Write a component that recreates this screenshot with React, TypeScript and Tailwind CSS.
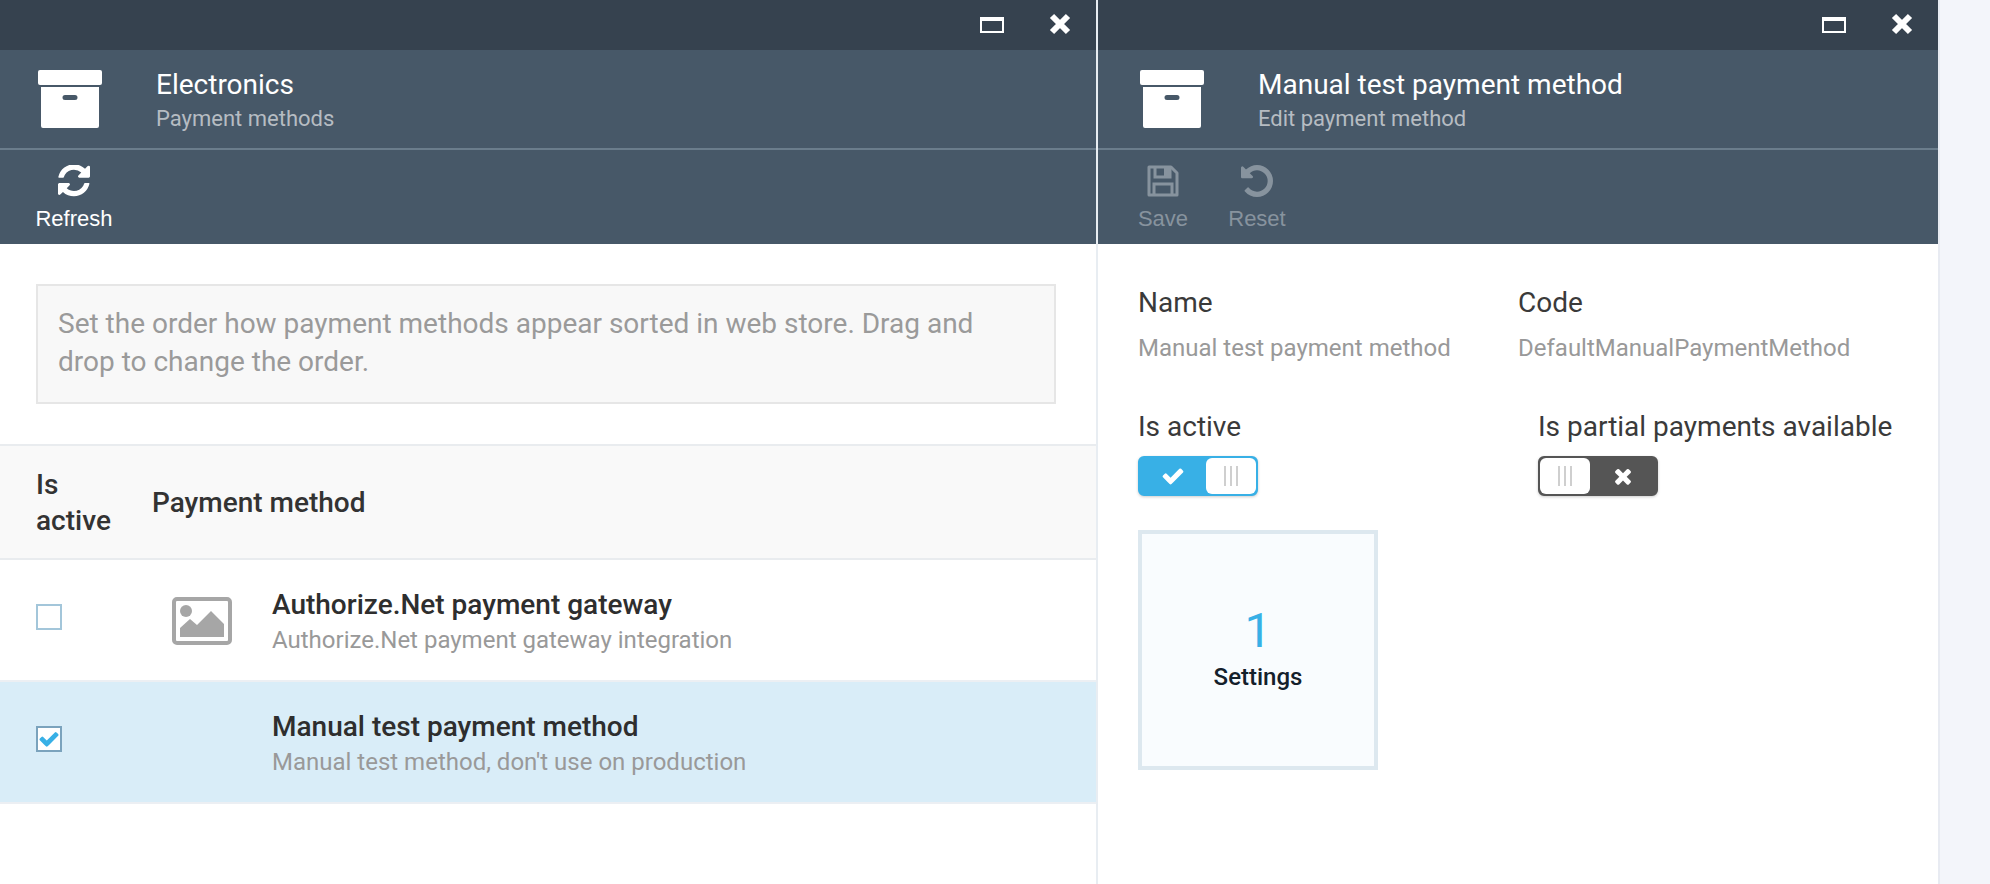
const BoxIcon = () => (
  <svg width="64" height="58" viewBox="0 0 64 58" fill="#fff" className="block">
    <rect x="0" y="0" width="64" height="15" rx="2" />
    <path d="M3 17h58v39a2 2 0 0 1-2 2H5a2 2 0 0 1-2-2z M27 25a2.5 2.5 0 0 0 0 5h10a2.5 2.5 0 0 0 0-5z" fillRule="evenodd" />
  </svg>
);

const ImageIcon = () => (
  <svg width="60" height="48" viewBox="0 0 60 48" className="block">
    <rect x="2" y="2" width="56" height="44" rx="3" fill="none" stroke="#a6a6a6" strokeWidth="4" />
    <circle cx="14" cy="14" r="6" fill="#a6a6a6" />
    <path d="M8 40V31l10-9 7 6 14-14 13 13v13z" fill="#a6a6a6" />
  </svg>
);

const RefreshIcon = () => (
  <svg width="32" height="32" viewBox="0 160 1536 1536" fill="currentColor" className="block">
    <path d="M1511 1056q0 5-1 7-64 268-268 434.5t-478 166.5q-146 0-282.5-55t-243.5-157l-129 129q-19 19-45 19t-45-19-19-45v-448q0-26 19-45t45-19h448q26 0 45 19t19 45-19 45l-137 137q71 66 161 102t187 36q134 0 250-65t186-179q11-17 53-117 8-23 30-23h192q13 0 22.5 9.5t9.5 22.5zm25-800v448q0 26-19 45t-45 19h-448q-26 0-45-19t-19-45 19-45l138-138q-148-137-349-137-134 0-250 65t-186 179q-11 17-53 117-8 23-30 23h-199q-13 0-22.5-9.5t-9.5-22.5v-7q65-268 270-434.5t480-166.5q146 0 284 55.5t245 156.5l130-129q19-19 45-19t45 19 19 45z" />
  </svg>
);

const UndoIcon = () => (
  <svg width="32" height="32" viewBox="0 -128 1536 1536" fill="currentColor" className="block">
    <path d="M1536 640q0 156-61 298t-164 245-245 164-298 61q-172 0-327-72.5t-264-204.5q-7-10-6.5-22.5t8.5-20.5l137-138q10-9 25-9 16 2 23 12 73 95 179 147t225 52q104 0 198.5-40.5t163.5-109.5 109.5-163.5 40.5-198.5-40.5-198.5-109.5-163.5-163.5-109.5-198.5-40.5q-98 0-188 35.5t-160 101.5l137 138q31 30 14 69-17 40-59 40h-448q-26 0-45-19t-19-45v-448q0-42 40-59 39-17 69 14l130 129q107-101 244.5-156.5t284.5-55.5q156 0 298 61t245 164 164 245 61 298z" />
  </svg>
);

const SaveIcon = () => (
  <svg width="32" height="32" viewBox="0 0 32 32" fill="none" stroke="currentColor" strokeWidth="3" className="block">
    <path d="M2 2h22l6 6v22H2z" strokeLinejoin="round" />
    <path d="M8 3v9h15V3" />
    <rect x="17" y="3" width="5" height="8" fill="currentColor" stroke="none" />
    <path d="M7 30V19h18v11" />
  </svg>
);

const CheckIcon = ({ size }: { size: number }) => (
  <svg width={size} height={size} viewBox="0 0 1792 1792" fill="currentColor" className="block">
    <path d="M1671 566q0 40-28 68l-724 724-136 136q-28 28-68 28t-68-28l-136-136-362-362q-28-28-28-68t28-68l136-136q28-28 68-28t68 28l294 295 656-657q28-28 68-28t68 28l136 136q28 28 28 68z" />
  </svg>
);

const TimesIcon = ({ size }: { size: number }) => (
  <svg width={size} height={size} viewBox="0 0 1792 1792" fill="currentColor" className="block">
    <path d="M1490 1322q0 40-28 68l-136 136q-28 28-68 28t-68-28l-294-294-294 294q-28 28-68 28t-68-28l-136-136q-28-28-28-68t28-68l294-294-294-294q-28-28-28-68t28-68l136-136q28-28 68-28t68 28l294 294 294-294q28-28 68-28t68 28l136 136q28 28 28 68t-28 68l-294 294 294 294q28 28 28 68z" />
  </svg>
);

const CloseIcon = () => (
  <svg width="22" height="22" viewBox="0 0 22 22" className="block">
    <path d="M3 3L19 19M19 3L3 19" stroke="#fff" strokeWidth="6" />
  </svg>
);

const WindowControls = () => (
  <div className="h-[50px] bg-[#36424f] flex justify-end items-center gap-[45px] pr-[25px]">
    <div className="w-[24px] h-[16px] border-2 border-t-[4px] border-white" />
    <div className="pb-[3px]">
      <CloseIcon />
    </div>
  </div>
);

const BladeHeader = ({ title, subtitle, inset }: { title: string; subtitle: string; inset: string }) => (
  <div className={`h-[100px] bg-[#475868] border-b-2 border-[#6b7d8c] flex items-start gap-[54px] ${inset}`}>
    <div className="pt-[20px] shrink-0">
      <BoxIcon />
    </div>
    <div className="pt-[17px]">
      <div className="text-[28px] leading-[36px] text-white">{title}</div>
      <div className="text-[22px] leading-[31px] text-[#b6bcc2]">{subtitle}</div>
    </div>
  </div>
);

const ToolButton = ({ label, icon, dim, width }: { label: string; icon: React.ReactNode; dim?: boolean; width: string }) => (
  <div className={`flex flex-col items-center ${width} ${dim ? "text-[#87939e]" : "text-white"}`}>
    {icon}
    <div className="mt-[10px] text-[22px] leading-[24px] font-['Liberation_Sans',sans-serif]">{label}</div>
  </div>
);

const Grip = () => (
  <div className="w-[50px] h-[36px] bg-white rounded-[6px] flex justify-center items-center gap-[4px]">
    <span className="w-[2px] h-[20px] bg-[#cfcfcf]" />
    <span className="w-[2px] h-[20px] bg-[#cfcfcf]" />
    <span className="w-[2px] h-[20px] bg-[#cfcfcf]" />
  </div>
);

const Switch = ({ on }: { on: boolean }) => (
  <div
    className={`w-[120px] h-[40px] rounded-[6px] border-2 flex items-center shadow-[0_1px_3px_rgba(0,0,0,0.2)] ${
      on ? "bg-[#38b0e6] border-[#38b0e6]" : "bg-[#555555] border-[#555555]"
    }`}
  >
    {!on && <Grip />}
    <div className="flex-1 flex justify-center text-white">
      {on ? <CheckIcon size={24} /> : <TimesIcon size={24} />}
    </div>
    {on && <Grip />}
  </div>
);

const MethodRow = ({ name, note, selected }: { name: string; note: string; selected?: boolean }) => (
  <div className={`h-[122px] border-b-2 border-[#eceff3] flex items-center ${selected ? "bg-[#d9edf8]" : "bg-white"}`}>
    <div className="w-[172px] pl-[36px] pb-[7px] shrink-0">
      <div
        className={`w-[26px] h-[26px] border-2 bg-white flex items-center justify-center ${
          selected ? "border-[#7ba3bd]" : "border-[#a3c6da]"
        }`}
      >
        {selected && (
          <span className="text-[#38b0e6]">
            <CheckIcon size={22} />
          </span>
        )}
      </div>
    </div>
    <div className="w-[100px] pt-[2px] shrink-0">{!selected && <ImageIcon />}</div>
    <div className="pt-[5px]">
      <div className="text-[28px] leading-[34px] font-medium text-[#2e2e2e]">{name}</div>
      <div className="text-[24px] leading-[36px] text-[#999999]">{note}</div>
    </div>
  </div>
);

export default function App() {
  return (
    <div className="h-screen overflow-hidden flex bg-[#f3f5fa] font-['Roboto',sans-serif]">
      <div className="w-[1096px] h-full bg-white shrink-0">
        <WindowControls />
        <BladeHeader title="Electronics" subtitle="Payment methods" inset="pl-[38px]" />
        <div className="h-[94px] bg-[#475868] pt-[15px] pl-[36px]">
          <ToolButton label="Refresh" width="w-[76px]" icon={<RefreshIcon />} />
        </div>
        <div className="pl-[36px] pr-[40px] pt-[40px]">
          <div className="h-[120px] border-2 border-[#e6e6e6] bg-[#f8f8f8] px-[20px] py-[19px] text-[28px] leading-[38px] text-[#9a9a9a]">
            Set the order how payment methods appear sorted in web store. Drag and drop to change the order.
          </div>
        </div>
        <div className="mt-[40px] h-[116px] bg-[#f9f9f9] border-y-2 border-[#e9ecef] flex items-center pt-[2px] text-[28px] leading-[36px] font-medium text-[#333333]">
          <div className="w-[152px] pl-[36px] shrink-0">
            Is
            <br />
            active
          </div>
          <div>Payment method</div>
        </div>
        <MethodRow name="Authorize.Net payment gateway" note="Authorize.Net payment gateway integration" />
        <MethodRow name="Manual test payment method" note="Manual test method, don't use on production" selected />
      </div>

      <div className="w-[2px] h-full bg-[#e8edf2] shrink-0" />

      <div className="w-[840px] h-full bg-white shrink-0">
        <WindowControls />
        <BladeHeader title="Manual test payment method" subtitle="Edit payment method" inset="pl-[42px]" />
        <div className="h-[94px] bg-[#475868] pt-[15px] pl-[40px] flex gap-[40px]">
          <ToolButton label="Save" dim width="w-[50px]" icon={<SaveIcon />} />
          <ToolButton label="Reset" dim width="w-[58px]" icon={<UndoIcon />} />
        </div>
        <div className="pl-[40px] pt-[41px]">
          <div className="flex text-[#3a3a3a]">
            <div className="w-[380px]">
              <div className="text-[28px] leading-[36px]">Name</div>
              <div className="mt-[11px] text-[24px] leading-[32px] text-[#999999]">Manual test payment method</div>
            </div>
            <div>
              <div className="text-[28px] leading-[36px]">Code</div>
              <div className="mt-[11px] text-[24px] leading-[32px] text-[#999999]">DefaultManualPaymentMethod</div>
            </div>
          </div>
          <div className="flex mt-[45px] text-[#3a3a3a]">
            <div className="w-[400px]">
              <div className="text-[28px] leading-[36px]">Is active</div>
              <div className="mt-[11px]">
                <Switch on />
              </div>
            </div>
            <div>
              <div className="text-[28px] leading-[36px]">Is partial payments available</div>
              <div className="mt-[11px]">
                <Switch on={false} />
              </div>
            </div>
          </div>
          <div className="mt-[34px] w-[240px] h-[240px] border-4 border-[#dde8ef] bg-[#f9fcfe] flex flex-col items-center justify-center pb-[4px]">
            <div className="text-[48px] leading-[54px] text-[#38b0e6]">1</div>
            <div className="mt-[3px] text-[24px] leading-[32px] font-medium text-[#14202b]">Settings</div>
          </div>
        </div>
      </div>

      <div className="w-[2px] h-full bg-[#e8ebf2] shrink-0" />
    </div>
  );
}
